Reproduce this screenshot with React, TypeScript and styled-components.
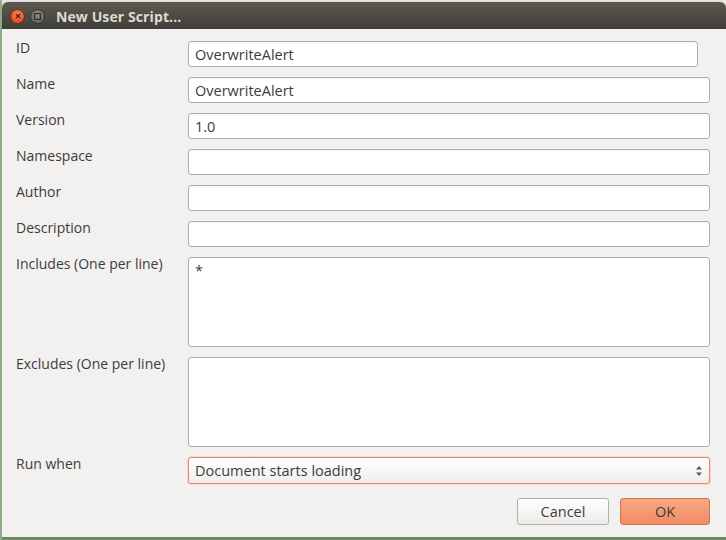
import React from "react";
import styled, { createGlobalStyle } from "styled-components";

const Global = createGlobalStyle`
  html, body { margin: 0; padding: 0; }
  body {
    width: 726px;
    height: 540px;
    overflow: hidden;
    background: linear-gradient(to bottom, #e8e6e2 0px, #e8e6e2 537px, #6f8a66 537px);
    font-family: "Open Sans", "Noto Sans", "DejaVu Sans", sans-serif;
  }
`;

const Backdrop = styled.div`
  width: 726px;
  height: 540px;
  box-sizing: border-box;
  padding: 2px 0 3px 2px;
  background: linear-gradient(to right, #8fae89 0px, #8fae89 2px, transparent 2px);
  display: flex;
`;

const Dialog = styled.div`
  flex: 1;
  display: flex;
  flex-direction: column;
  background: #f2f1f0;
  border-radius: 6px 6px 0 0;
  overflow: hidden;
  box-shadow: 0 0 1px rgba(0,0,0,0.4);
`;

const TitleBar = styled.div`
  height: 27px;
  display: flex;
  align-items: center;
  padding: 1px 0 0 8px;
  box-sizing: border-box;
  background: linear-gradient(to bottom, #5e5a51, #3f3d38);
  gap: 5px;
`;

const WinButton = styled.div<{ $kind: "close" | "max" }>`
  width: 15px;
  height: 15px;
  border-radius: 50%;
  box-sizing: border-box;
  display: flex;
  align-items: center;
  justify-content: center;
  background: ${(p) =>
    p.$kind === "close"
      ? "radial-gradient(circle at 50% 35%, #f58a61, #e0501f 70%)"
      : "radial-gradient(circle at 50% 35%, #8d8a83, #6b6964 70%)"};
  border: 1px solid ${(p) => (p.$kind === "close" ? "#7a2a10" : "#34322e")};
`;

const Title = styled.div`
  margin-left: 6px;
  color: #dfdbd2;
  font-weight: 700;
  font-size: 14px;
  letter-spacing: 0.1px;
  font-family: "Open Sans", "Noto Sans", sans-serif;
`;

const Form = styled.div`
  display: grid;
  grid-template-columns: 172px 1fr;
  row-gap: 10px;
  padding: 12px 16px 0 14px;
  align-items: start;
`;

const Label = styled.div`
  font-size: 14px;
  line-height: 17px;
  margin-top: -2px;
  color: #3c3c3c;
`;

const TextInput = styled.div<{ $narrow?: boolean }>`
  height: 26px;
  box-sizing: border-box;
  margin-right: ${(p) => (p.$narrow ? "12px" : "0")};
  background: #ffffff;
  border: 1px solid #b0ada7;
  border-radius: 3px;
  box-shadow: inset 0 1px 0 rgba(0,0,0,0.04);
  display: flex;
  align-items: center;
  padding: 0 6px;
  font-size: 14.5px;
  color: #3c3c3c;
`;

const TextArea = styled.div`
  height: 90px;
  box-sizing: border-box;
  background: #ffffff;
  border: 1px solid #b0ada7;
  border-radius: 3px;
  padding: 4px 6px;
  font-size: 14.5px;
  line-height: 18px;
  color: #3c3c3c;
`;

const Select = styled.div`
  height: 27px;
  box-sizing: border-box;
  background: linear-gradient(to bottom, #ffffff, #efeeec);
  border: 1px solid #ee8660;
  border-radius: 3px;
  box-shadow: 0 0 0 0.5px rgba(238, 134, 96, 0.4);
  display: flex;
  align-items: center;
  justify-content: space-between;
  padding: 0 6px 0 6px;
  font-size: 14.5px;
  color: #3c3c3c;
`;

const Arrows = styled.svg`
  width: 8px;
  height: 14px;
`;

const Footer = styled.div`
  display: flex;
  justify-content: flex-end;
  gap: 11px;
  padding: 14px 16px 0 0;
`;

const Button = styled.div<{ $primary?: boolean; $w: number }>`
  width: ${(p) => p.$w}px;
  height: 27px;
  box-sizing: border-box;
  border-radius: 3px;
  display: flex;
  align-items: center;
  justify-content: center;
  font-size: 14.5px;
  color: #3c3c3c;
  border: 1px solid ${(p) => (p.$primary ? "#cf7452" : "#b3b0aa")};
  background: ${(p) =>
    p.$primary
      ? "linear-gradient(to bottom, #f9a882, #f18a63)"
      : "linear-gradient(to bottom, #ffffff, #ecebe9)"};
`;

const rows: { label: string; value?: string; narrow?: boolean }[] = [
  { label: "ID", value: "OverwriteAlert", narrow: true },
  { label: "Name", value: "OverwriteAlert" },
  { label: "Version", value: "1.0" },
  { label: "Namespace" },
  { label: "Author" },
  { label: "Description" },
];

export default function App() {
  return (
    <>
      <Global />
      <Backdrop>
        <Dialog>
          <TitleBar>
            <WinButton $kind="close">
              <svg width="6" height="6" viewBox="0 0 6 6">
                <path d="M0.8 0.8 L5.2 5.2 M5.2 0.8 L0.8 5.2" stroke="#3a1a0c" strokeWidth="1.2" />
              </svg>
            </WinButton>
            <WinButton $kind="max">
              <svg width="7" height="7" viewBox="0 0 7 7">
                <rect x="0.6" y="0.6" width="5.8" height="5.8" fill="none" stroke="#2e2d2a" strokeWidth="1.1" />
              </svg>
            </WinButton>
            <Title>New User Script...</Title>
          </TitleBar>
          <Form>
            {rows.map((r) => (
              <React.Fragment key={r.label}>
                <Label>{r.label}</Label>
                <TextInput $narrow={r.narrow}>{r.value ?? ""}</TextInput>
              </React.Fragment>
            ))}
            <Label>Includes (One per line)</Label>
            <TextArea>*</TextArea>
            <Label>Excludes (One per line)</Label>
            <TextArea />
            <Label>Run when</Label>
            <Select>
              <span>Document starts loading</span>
              <Arrows viewBox="0 0 8 14">
                <path d="M4 2 L7 5.5 L1 5.5 Z" fill="#5a5853" />
                <path d="M4 12 L7 8.5 L1 8.5 Z" fill="#5a5853" />
              </Arrows>
            </Select>
          </Form>
          <Footer>
            <Button $w={92}>Cancel</Button>
            <Button $w={90} $primary>
              OK
            </Button>
          </Footer>
        </Dialog>
      </Backdrop>
    </>
  );
}
